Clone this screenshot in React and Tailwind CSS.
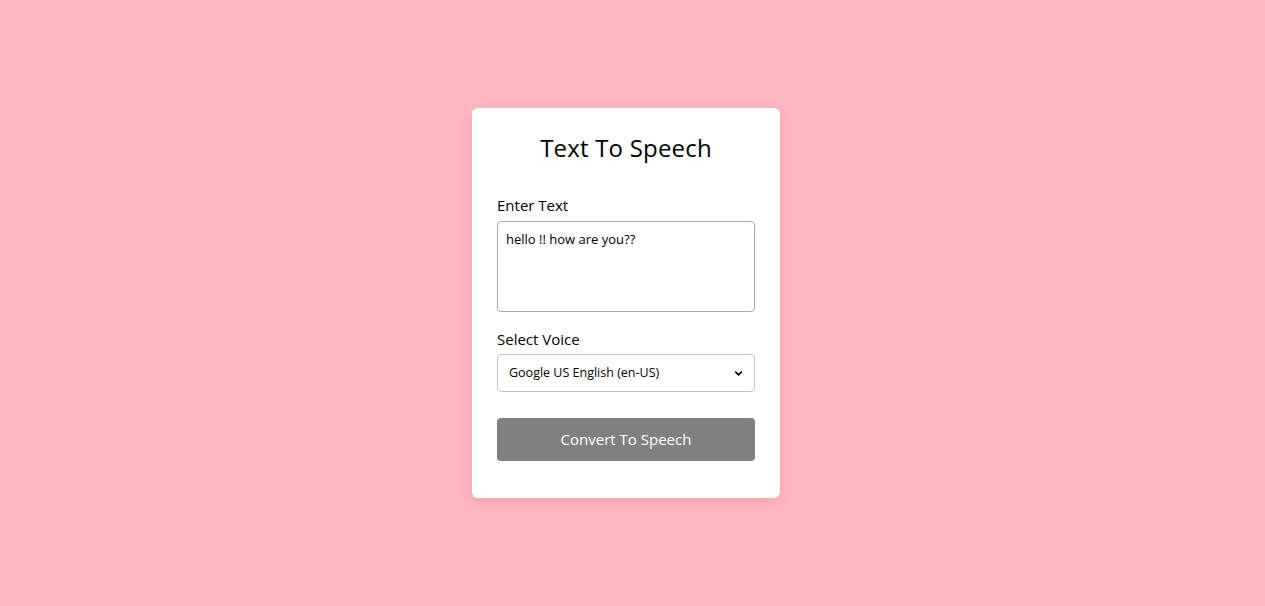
import { ChevronDown } from 'lucide-react'

// Text to speech card, centred on a pink page

export default function App() {
  return (
    <div
      className="w-full h-[606px] bg-[#ffb6c1] flex items-center justify-center pr-[13px]"
      style={{ fontFamily: '"Open Sans", "Noto Sans", sans-serif' }}
    >
      <div className="w-[308px] h-[390px] bg-white rounded-md shadow-[0_4px_14px_rgba(0,0,0,0.08)] px-[25px] pt-[24px] flex flex-col">
        <h1 className="text-[24px] leading-[32px] text-black text-center font-medium tracking-[0.2px]">
          Text To Speech
        </h1>

        <label className="mt-[30px] text-[15px] leading-[22px] text-black">Enter Text</label>
        <div className="mt-[5px] h-[91px] border border-[#a9a9a9] rounded-[4px] px-[8px] pt-[8px] text-[13px] leading-[18px] text-black">
          hello !! how are you??
        </div>

        <label className="mt-[16px] text-[15px] leading-[22px] text-black">Select Voice</label>
        <div className="mt-[4px] h-[38px] border border-[#c4c4c4] rounded-[4px] pl-[11px] pr-[10px] flex items-center justify-between text-[12.5px] text-black">
          <span>Google US English (en-US)</span>
          <ChevronDown size={11} strokeWidth={3.5} />
        </div>

        <button className="mt-[26px] h-[43px] bg-[#808080] rounded-[4px] text-white text-[15px]">
          Convert To Speech
        </button>
      </div>
    </div>
  )
}
